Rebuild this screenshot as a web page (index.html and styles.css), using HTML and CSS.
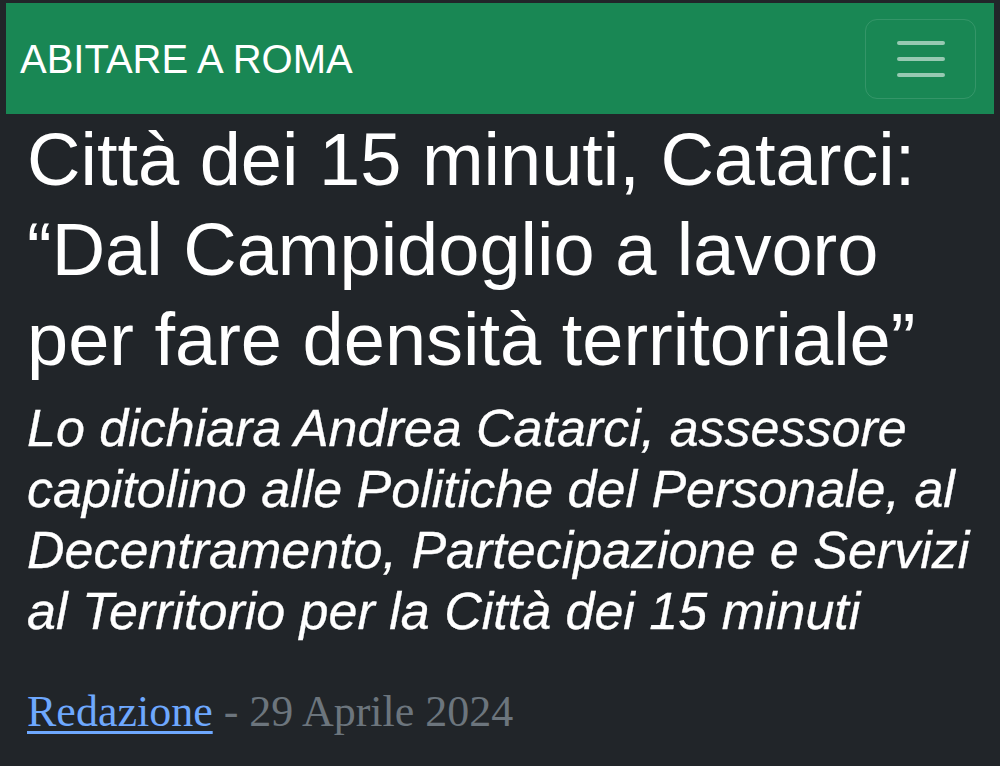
FILE: index.html
```html
<!DOCTYPE html>
<html lang="it">
<head>
  <meta charset="UTF-8">
  <meta name="viewport" content="width=device-width, initial-scale=1.0">
  <title>Abitare a Roma</title>
  <link rel="stylesheet" href="styles.css">
</head>
<body>

  <nav class="navbar">
    <a href="#" class="brand">ABITARE A ROMA</a>
    <button class="toggler" aria-label="Menu">
      <svg width="48" height="36" viewBox="0 0 48 36">
        <path d="M2 2 H46 M2 18 H46 M2 34 H46" stroke="rgba(255,255,255,0.55)" stroke-width="4" stroke-linecap="round" fill="none"/>
      </svg>
    </button>
  </nav>

  <article class="post">
    <h1 class="post-title">Città dei 15 minuti, Catarci: “Dal Campidoglio a lavoro per fare densità territoriale”</h1>

    <p class="post-lead">Lo dichiara Andrea Catarci, assessore capitolino alle Politiche del Personale, al Decentramento, Partecipazione e Servizi al Territorio per la Città dei 15 minuti</p>

    <p class="post-meta"><a href="#" class="author">Redazione</a> - 29 Aprile 2024</p>
  </article>

</body>
</html>
```

FILE: styles.css
```css
* {
  margin: 0;
  padding: 0;
  box-sizing: border-box;
}

body {
  background: #212529;
  color: #fff;
  font-family: 'Liberation Sans', Arial, sans-serif;
  height: 766px;
  overflow: hidden;
}

.navbar {
  margin: 3px 6px 0;
  height: 111px;
  background-color: #198754;
  display: flex;
  align-items: center;
  justify-content: space-between;
  padding: 0 18px 0 14px;
}

.brand {
  color: #fff;
  text-decoration: none;
  font-size: 40px;
  padding-top: 2px;
}

.toggler {
  width: 111px;
  height: 80px;
  background: transparent;
  border: 1.5px solid rgba(255, 255, 255, 0.12);
  border-radius: 12px;
  display: flex;
  align-items: center;
  justify-content: center;
  cursor: pointer;
}

.post {
  padding: 1px 20px 0 27px;
}

.post-title {
  font-size: 74px;
  font-weight: 400;
  line-height: 90px;
  margin-bottom: 13px;
}

.post-lead {
  font-size: 52px;
  font-style: italic;
  line-height: 61px;
  margin-bottom: 38px;
  -webkit-text-stroke: 0.3px #fff;
}

.post-meta {
  font-family: 'Liberation Serif', Georgia, serif;
  font-size: 44px;
  line-height: 64px;
  color: #6c757d;
}

.author {
  color: #6ea8fe;
  text-decoration-thickness: 3px;
  text-underline-offset: 5px;
}
```
